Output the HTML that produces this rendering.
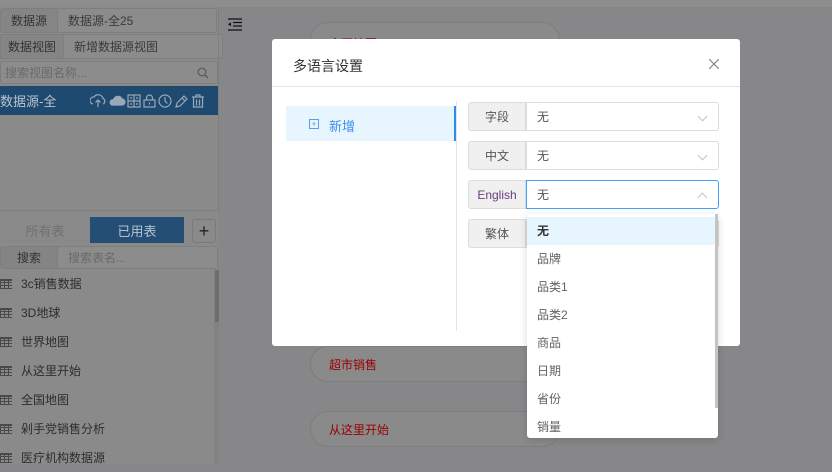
<!DOCTYPE html>
<html><head><meta charset="utf-8"><style>
*{box-sizing:border-box;margin:0;padding:0}
body{width:832px;height:464px;overflow:hidden;position:relative;background:#87878a;font-family:"Liberation Sans","Noto Sans CJK SC",sans-serif;font-size:12px;color:#333}
.abs{position:absolute}
.top{left:0;top:0;width:832px;height:7px;background:#8d8d8d}
.side{left:0;top:7px;width:218px;height:457px;background:#8a8a8a}
.lbl{background:#858585;border:1px solid #7e7e7e;color:#333;font-size:12px;display:flex;align-items:center;justify-content:center}
.inp{background:#8c8c8c;border:1px solid #7e7e7e;border-radius:3px;color:#3a3a3a;font-size:12px;display:flex;align-items:center;padding-left:10px}
.row{display:flex;align-items:center;height:29px;color:#2d2d2d;font-size:12px}
.tico{width:12px;height:10px;margin:0 9px 0 0;background:
linear-gradient(#3a3a3a,#3a3a3a) 0 0/12px 2px no-repeat,
repeating-linear-gradient(90deg,#3a3a3a 0 1px,transparent 1px 4px),
repeating-linear-gradient(#3a3a3a 0 1px,transparent 1px 3px);opacity:.8}
.pill{border:1px solid #7d7d7d;border-radius:18px;background:#8a8a8a;color:#9a0000;font-size:12px;padding-left:18px;display:flex;align-items:center}
.modal{left:272px;top:39px;width:468px;height:307px;background:#fff;border-radius:3px}
.flab{left:196px;width:58px;height:29px;background:#f0f0f0;border:1px solid #dcdcdc;border-radius:3px 0 0 3px;display:flex;align-items:center;justify-content:center;color:#555;font-size:12px}
.fsel{left:254px;width:193px;height:29px;border:1px solid #dcdcdc;border-radius:0 3px 3px 0;display:flex;align-items:center;padding-left:10px;color:#555;font-size:12px}
.chev{position:absolute;right:12px;top:10px;width:7px;height:7px;border-right:1px solid #c0c4cc;border-bottom:1px solid #c0c4cc;transform:rotate(45deg)}
.dd{left:527px;top:214px;width:191px;height:224px;background:#fff;border-radius:3px;box-shadow:0 2px 8px rgba(0,0,0,.15);overflow:hidden}
.dd div.it{height:28px;line-height:28px;padding-left:10px;color:#606266;font-size:12px}
</style></head><body>
<div class="abs top"></div>
<div class="abs side"></div>
<div class="abs lbl" style="left:0;top:8px;width:58px;height:25px;border-radius:3px 0 0 3px">数据源</div>
<div class="abs inp" style="left:57px;top:8px;width:160px;height:25px">数据源-全25</div>
<div class="abs lbl" style="left:0;top:34px;width:64px;height:25px">数据视图</div>
<div class="abs inp" style="left:63px;top:34px;width:160px;height:25px">新增数据源视图</div>
<div class="abs inp" style="left:0;top:61px;width:218px;height:23px;color:#6a6a6a;padding-left:4px">搜索视图名称...
<svg class="abs" style="right:8px;top:5px" width="12" height="12" viewBox="0 0 12 12"><circle cx="5" cy="5" r="3.8" fill="none" stroke="#5a5a5a" stroke-width="1.2"/><path d="M8 8l3 3" stroke="#5a5a5a" stroke-width="1.3"/></svg></div>
<div class="abs" style="left:0;top:86px;width:218px;height:29px;background:#1f4a70;color:#b9c4cf;font-size:13px;display:flex;align-items:center">数据源-全
<svg class="abs" style="left:90px;top:7px" width="122" height="16" viewBox="0 0 122 16" fill="none" stroke="#9aa9b8" stroke-width="1.2">
<path d="M3 11a3.5 3.5 0 0 1 1-7 5 5 0 0 1 9 1.5 3 3 0 0 1 0 5.5M8 14V7M5.5 9.5L8 7l2.5 2.5"/>
<path d="M22 12h10a3 3 0 0 0 0-6 4.5 4.5 0 0 0-8.5 1A2.5 2.5 0 0 0 22 12z" fill="#9aa9b8"/>
<rect x="38" y="2" width="12" height="12"/><path d="M44 2v12M38 8h12M40 5h2M46 5h2M40 11h2M46 11h2"/>
<rect x="54" y="7" width="11" height="7"/><path d="M56.5 7V5a3 3 0 0 1 6 0v2M59.5 9.5v2"/>
<circle cx="75" cy="8" r="6"/><path d="M75 4v4l2.5 2.5"/>
<path d="M86 14l1-4 7-7 3 3-7 7zM92 5l3 3"/>
<path d="M102 4h12M106 4V2h4v2M103.5 4v10h9V4M106.5 6.5v6M109.5 6.5v6"/>
</svg></div>
<div class="abs" style="left:218px;top:7px;width:1px;height:204px;background:#7e7e7e"></div>
<div class="abs" style="left:0;top:210px;width:219px;height:1px;background:#7e7e7e"></div>
<div class="abs" style="left:0;top:217px;width:90px;height:26px;background:#898989;color:#707070;font-size:13px;display:flex;align-items:center;justify-content:center">所有表</div>
<div class="abs" style="left:90px;top:217px;width:94px;height:26px;background:#244e73;color:#b5c3d0;font-size:13px;display:flex;align-items:center;justify-content:center">已用表</div>
<div class="abs" style="left:192px;top:219px;width:24px;height:24px;border:1px solid #7a7a7a;border-radius:3px;display:flex;align-items:center;justify-content:center;font-size:18px;color:#222">+</div>
<div class="abs lbl" style="left:0;top:246px;width:58px;height:23px;border-radius:3px 0 0 3px;background:#848484">搜索</div>
<div class="abs inp" style="left:57px;top:246px;width:161px;height:23px;color:#6a6a6a">搜索表名...</div>
<div class="abs" style="left:214px;top:270px;width:5px;height:194px;background:#828282"></div>
<div class="abs" style="left:215px;top:270px;width:4px;height:52px;background:#6e6e6e"></div>
<div class="abs" style="left:0;top:269px;width:214px">
<div class="row"><span class="tico"></span>3c销售数据</div>
<div class="row"><span class="tico"></span>3D地球</div>
<div class="row"><span class="tico"></span>世界地图</div>
<div class="row"><span class="tico"></span>从这里开始</div>
<div class="row"><span class="tico"></span>全国地图</div>
<div class="row"><span class="tico"></span>剁手党销售分析</div>
<div class="row"><span class="tico"></span>医疗机构数据源</div>
</div>
<svg class="abs" style="left:228px;top:18px" width="14" height="13" viewBox="0 0 14 13" stroke="#111" stroke-width="1.3"><path d="M0 1h14M5 4.5h9M5 8h9M0 12h14"/><path d="M0 6.2l3-2v4z" fill="#111" stroke="none"/></svg>
<div class="abs pill" style="left:310px;top:22px;width:250px;height:36px;align-items:flex-start;padding-top:12px">全国地图</div>
<div class="abs pill" style="left:310px;top:346px;width:250px;height:36px">超市销售</div>
<div class="abs pill" style="left:310px;top:411px;width:250px;height:36px">从这里开始</div>

<div class="abs modal">
<div class="abs" style="left:21px;top:17px;font-size:14px;color:#303133">多语言设置</div>
<svg class="abs" style="left:437px;top:20px" width="10" height="10" viewBox="0 0 10 10" stroke="#888" stroke-width="1.2"><path d="M0 0l10 10M10 0L0 10"/></svg>
<div class="abs" style="left:0;top:47px;width:468px;height:1px;background:#e4e4e4"></div>
<div class="abs" style="left:14px;top:67px;width:170px;height:35px;background:#e6f5fe"></div>
<div class="abs" style="left:182px;top:67px;width:3px;height:35px;background:#2d8cf0"></div>
<div class="abs" style="left:184px;top:62px;width:1px;height:230px;background:#e4e4e4"></div>
<div class="abs" style="left:37px;top:80px;width:10px;height:10px;border:1px solid #5aa2ef;display:flex;align-items:center;justify-content:center;color:#5aa2ef;font-size:9px;line-height:8px">+</div>
<div class="abs" style="left:57px;top:77px;font-size:13px;color:#3f8ef0">新增</div>
<div class="abs flab" style="top:63px">字段</div>
<div class="abs fsel" style="top:63px">无<span class="chev"></span></div>
<div class="abs flab" style="top:102px">中文</div>
<div class="abs fsel" style="top:102px">无<span class="chev"></span></div>
<div class="abs flab" style="top:141px;color:#6a3d7a">English</div>
<div class="abs fsel" style="top:141px;border-color:#409eff">无<span class="chev" style="transform:rotate(225deg);top:13px"></span></div>
<div class="abs flab" style="top:180px">繁体</div>
<div class="abs fsel" style="top:180px"></div>
</div>
<div class="abs dd">
<div class="it" style="background:#e6f5fe;color:#333;font-weight:bold;margin-top:3px">无</div>
<div class="it">品牌</div><div class="it">品类1</div><div class="it">品类2</div><div class="it">商品</div><div class="it">日期</div><div class="it">省份</div><div class="it">销量</div>
</div>
<div class="abs" style="left:715px;top:214px;width:3px;height:194px;background:#c4c4c4"></div>
</body></html>
